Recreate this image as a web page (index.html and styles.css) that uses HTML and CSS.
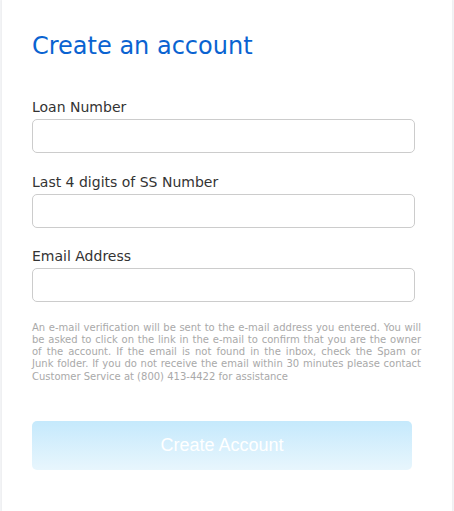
FILE: index.html
```html
<!DOCTYPE html>
<html lang="en">
<head>
<meta charset="utf-8">
<title>Create an account</title>
<link rel="stylesheet" href="styles.css">
</head>
<body>
<div class="card">
  <h1 class="title">Create an account</h1>
  <form class="form">
    <div class="field">
      <label class="label" for="loan">Loan Number</label>
      <input class="input" id="loan" type="text">
    </div>
    <div class="field">
      <label class="label" for="ssn">Last 4 digits of SS Number</label>
      <input class="input" id="ssn" type="text">
    </div>
    <div class="field">
      <label class="label" for="email">Email Address</label>
      <input class="input" id="email" type="email">
    </div>
    <p class="note">An e-mail verification will be sent to the e-mail address you entered. You will be asked to click on the link in the e-mail to confirm that you are the owner of the account. If the email is not found in the inbox, check the Spam or <span class="nowrap">Junk folder.</span> If you do not receive the email within 30 minutes please contact Customer Service at (800) 413-4422 for assistance</p>
    <button class="button" type="button" disabled>Create Account</button>
  </form>
</div>
</body>
</html>
```

FILE: styles.css
```css
html, body {
  margin: 0;
  padding: 0;
  height: 100%;
}
body {
  background: #f3f4f6;
  font-family: "DejaVu Sans", Verdana, sans-serif;
}
.card {
  box-sizing: border-box;
  min-height: 100%;
  margin: 0 2px;
  background: #ffffff;
  box-shadow: 0 0 2px rgba(0, 0, 0, 0.06);
  padding: 32px 31px 40px 30px;
}
.title {
  margin: 0;
  font-size: 24px;
  line-height: 28px;
  font-weight: normal;
  color: #0a63d1;
}
.form {
  margin-top: 37px;
  display: flex;
  flex-direction: column;
}
.field {
  display: flex;
  flex-direction: column;
  margin-bottom: 18.5px;
}
.label {
  font-size: 14px;
  line-height: 20px;
  color: #333333;
  margin-bottom: 2px;
}
.input {
  box-sizing: border-box;
  width: 383px;
  height: 34px;
  border: 1px solid #cccccc;
  border-radius: 5px;
  background: #ffffff;
  margin: 0;
  padding: 0 8px;
  font-size: 14px;
}
.note {
  margin: 1px 0 0;
  font-size: 10px;
  line-height: 12.3px;
  color: #a9a9a9;
  text-align: justify;
}
.nowrap {
  white-space: nowrap;
}
.button {
  box-sizing: border-box;
  margin-top: 38px;
  width: 380px;
  height: 49px;
  border: none;
  border-radius: 5px;
  background: linear-gradient(to bottom, #c5e9fc, #e8f6fd);
  color: #ffffff;
  font-family: "Liberation Sans", Arial, sans-serif;
  font-size: 18px;
  padding: 0;
}
```
